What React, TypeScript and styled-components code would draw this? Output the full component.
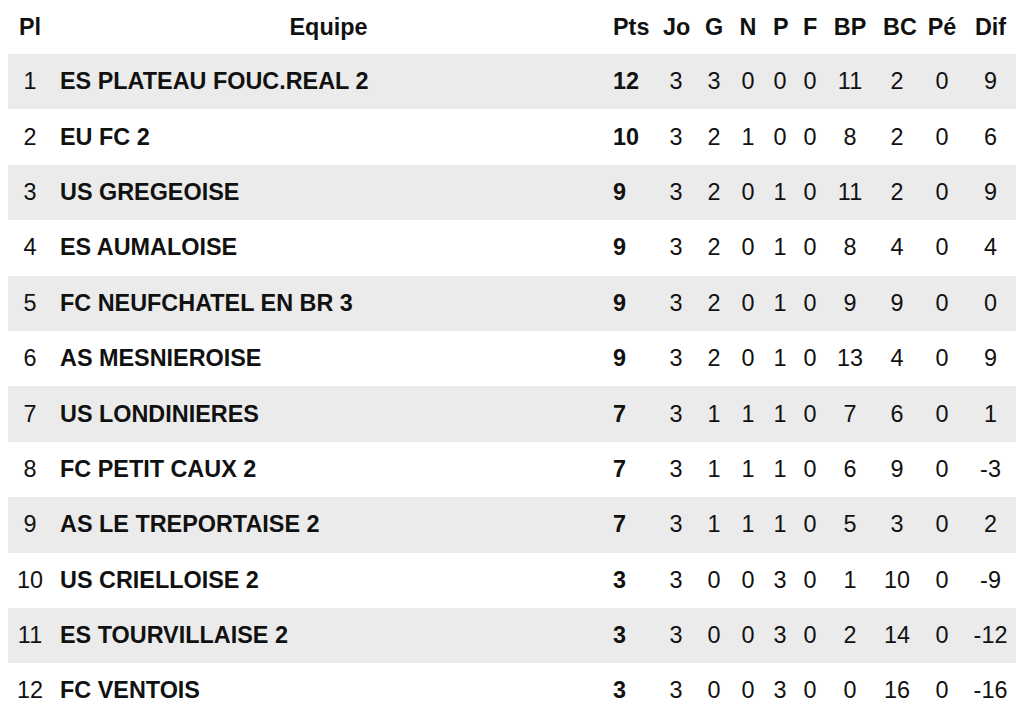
import * as React from 'react';
import styled, { createGlobalStyle } from 'styled-components';

const GlobalStyle = createGlobalStyle`
    body {
        margin: 0;
        padding: 0 8px;
        background: #fff;
        font-family: 'Liberation Sans', Arial, Helvetica, sans-serif;
        color: #111;
    }
`;

const Table = styled.table`
    width: 100%;
    border-collapse: collapse;
    table-layout: fixed;
    font-size: 23.4px;
`;

const HeadCell = styled.th`
    height: 54px;
    padding: 0 8px;
    font-weight: bold;
    text-align: center;
    white-space: nowrap;
`;

type RowProps = { $shaded: boolean };
const Row = styled.tr<RowProps>`
    background: ${(props: RowProps) => (props.$shaded ? '#ebebeb' : 'transparent')};
`;

type CellProps = { $bold?: boolean; $align?: 'left' | 'center' };
const Cell = styled.td<CellProps>`
    height: 55.4px;
    padding: 0 8px;
    white-space: nowrap;
    font-weight: ${(props: CellProps) => (props.$bold ? 'bold' : 'normal')};
    text-align: ${(props: CellProps) => props.$align ?? 'center'};
`;

interface Team {
    name: string;
    pts: number;
    jo: number;
    g: number;
    n: number;
    p: number;
    f: number;
    bp: number;
    bc: number;
    pe: number;
    dif: number;
}

const TEAMS: Team[] = [
    { name: 'ES PLATEAU FOUC.REAL 2', pts: 12, jo: 3, g: 3, n: 0, p: 0, f: 0, bp: 11, bc: 2, pe: 0, dif: 9 },
    { name: 'EU FC 2', pts: 10, jo: 3, g: 2, n: 1, p: 0, f: 0, bp: 8, bc: 2, pe: 0, dif: 6 },
    { name: 'US GREGEOISE', pts: 9, jo: 3, g: 2, n: 0, p: 1, f: 0, bp: 11, bc: 2, pe: 0, dif: 9 },
    { name: 'ES AUMALOISE', pts: 9, jo: 3, g: 2, n: 0, p: 1, f: 0, bp: 8, bc: 4, pe: 0, dif: 4 },
    { name: 'FC NEUFCHATEL EN BR 3', pts: 9, jo: 3, g: 2, n: 0, p: 1, f: 0, bp: 9, bc: 9, pe: 0, dif: 0 },
    { name: 'AS MESNIEROISE', pts: 9, jo: 3, g: 2, n: 0, p: 1, f: 0, bp: 13, bc: 4, pe: 0, dif: 9 },
    { name: 'US LONDINIERES', pts: 7, jo: 3, g: 1, n: 1, p: 1, f: 0, bp: 7, bc: 6, pe: 0, dif: 1 },
    { name: 'FC PETIT CAUX 2', pts: 7, jo: 3, g: 1, n: 1, p: 1, f: 0, bp: 6, bc: 9, pe: 0, dif: -3 },
    { name: 'AS LE TREPORTAISE 2', pts: 7, jo: 3, g: 1, n: 1, p: 1, f: 0, bp: 5, bc: 3, pe: 0, dif: 2 },
    { name: 'US CRIELLOISE 2', pts: 3, jo: 3, g: 0, n: 0, p: 3, f: 0, bp: 1, bc: 10, pe: 0, dif: -9 },
    { name: 'ES TOURVILLAISE 2', pts: 3, jo: 3, g: 0, n: 0, p: 3, f: 0, bp: 2, bc: 14, pe: 0, dif: -12 },
    { name: 'FC VENTOIS', pts: 3, jo: 3, g: 0, n: 0, p: 3, f: 0, bp: 0, bc: 16, pe: 0, dif: -16 },
];

// column widths measured from the standings page
const COLUMNS: { label: string; width: number }[] = [
    { label: 'Pl', width: 44 },
    { label: 'Equipe', width: 553 },
    { label: 'Pts', width: 50 },
    { label: 'Jo', width: 42 },
    { label: 'G', width: 34 },
    { label: 'N', width: 34 },
    { label: 'P', width: 30 },
    { label: 'F', width: 30 },
    { label: 'BP', width: 50 },
    { label: 'BC', width: 44 },
    { label: 'Pé', width: 46 },
    { label: 'Dif', width: 51 },
];

export default function App(): React.ReactElement {
    return (
        <>
            <GlobalStyle />
            <Table>
                <colgroup>
                    {COLUMNS.map((col) => (
                        <col key={col.label} style={{ width: col.width }} />
                    ))}
                </colgroup>
                <thead>
                    <tr>
                        {COLUMNS.map((col) => (
                            <HeadCell key={col.label}>{col.label}</HeadCell>
                        ))}
                    </tr>
                </thead>
                <tbody>
                    {TEAMS.map((team, i) => (
                        <Row key={team.name} $shaded={i % 2 === 0}>
                            <Cell>{i + 1}</Cell>
                            <Cell $bold $align="left">{team.name}</Cell>
                            <Cell $bold $align="left">{team.pts}</Cell>
                            <Cell>{team.jo}</Cell>
                            <Cell>{team.g}</Cell>
                            <Cell>{team.n}</Cell>
                            <Cell>{team.p}</Cell>
                            <Cell>{team.f}</Cell>
                            <Cell>{team.bp}</Cell>
                            <Cell>{team.bc}</Cell>
                            <Cell>{team.pe}</Cell>
                            <Cell>{team.dif}</Cell>
                        </Row>
                    ))}
                </tbody>
            </Table>
        </>
    );
}
